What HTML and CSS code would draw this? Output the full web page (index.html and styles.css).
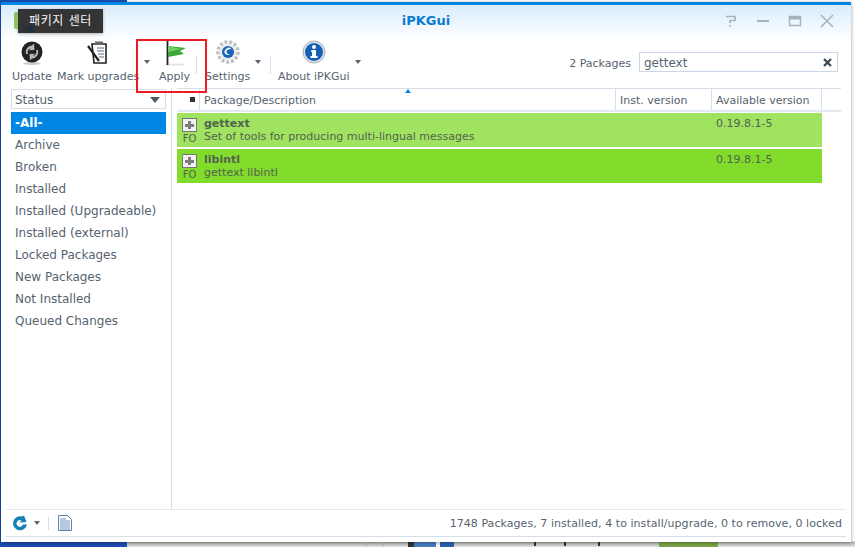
FILE: index.html
```html
<!DOCTYPE html>
<html lang="en">
<head>
<meta charset="utf-8">
<title>iPKGui</title>
<link rel="stylesheet" href="styles.css">
</head>
<body>
<div class="desktop">
  <div class="desk-blue"></div>
  <div class="desk-line l1"></div>
  <div class="desk-line l2"></div>
  <div class="person"></div>
  <div class="desk-mark m1"></div>
  <div class="desk-mark m2"></div>
  <div class="desk-mark m3"></div>
  <div class="desk-green"></div>
</div>
<main class="window">
  <header class="titlebar">
    <span class="title">iPKGui</span>
    <div class="winctl">
      <svg width="16" height="14" viewBox="0 0 16 14"><path d="M3 2.500h9v4H7v2.500M7 11v2" fill="none" stroke="#a9b2bb" stroke-width="1.6"/></svg>
      <svg width="16" height="14" viewBox="0 0 16 14"><path d="M2 7h12" stroke="#a9b2bb" stroke-width="2"/></svg>
      <svg width="16" height="14" viewBox="0 0 16 14"><path d="M2.500 2.500h11v9h-11z" fill="none" stroke="#a9b2bb" stroke-width="1.5"/><path d="M2 4h12" stroke="#a9b2bb" stroke-width="3"/></svg>
      <svg width="16" height="14" viewBox="0 0 16 14"><path d="M2 1l12 12M14 1L2 13" stroke="#a9b2bb" stroke-width="1.6"/></svg>
    </div>
  </header>
  <section class="toolbar">
    <div class="tool t-update">
      <svg class="ico" width="26" height="26" viewBox="0 0 26 26"><ellipse cx="13" cy="23.500" rx="9" ry="1.500" fill="#ccc"/><circle cx="13" cy="12" r="10.500" fill="#232323"/><path d="M7 14a6.500 6.500 0 0 1 6-8.500l2-2 .5 6.500-5.500.2 2-2a4 4 0 0 0-3 5.800zM19 10a6.500 6.500 0 0 1-6 8.500l-2 2-.5-6.500 5.500-.2-2 2a4 4 0 0 0 3-5.800z" fill="#b8b8b8"/></svg>
      <span>Update</span>
    </div>
    <div class="tool t-mark">
      <svg class="ico" width="26" height="26" viewBox="0 0 26 26"><path d="M7 4h14v19H9z" fill="#fff" stroke="#222" stroke-width="1.600"/><path d="M10 1.500h8v3.500h-8z" fill="#666"/><path d="M12 8h7M12 11h7M13 14h6M14 17h5" stroke="#5a6a80"/><path d="M3 6l11 15" stroke="#222" stroke-width="2.200"/></svg>
      <span>Mark upgrades</span>
    </div>
    <span class="caret c1"></span>
    <div class="tool t-apply">
      <svg class="ico" width="26" height="26" viewBox="0 0 26 26"><ellipse cx="13" cy="24.500" rx="10" ry="1" fill="#e2e2e2"/><path d="M5.500 0v25" stroke="#222" stroke-width="1.800"/><path d="M6 6l18 2-6 3 4 3-16 3z" fill="#3ba63a"/><path d="M6 6l13 3-13 3z" fill="#74cf62"/></svg>
      <span>Apply</span>
    </div>
    <i class="sep"></i>
    <div class="tool t-settings">
      <svg class="ico" width="26" height="26" viewBox="0 0 26 26"><circle cx="13" cy="12" r="10" fill="none" stroke="#bcc1c6" stroke-width="3.500" stroke-dasharray="3 1.800"/><circle cx="13" cy="12" r="8.500" fill="#e9ebed"/><circle cx="13" cy="12" r="6" fill="#1a63b8"/><path d="M9.500 13a4.500 4.500 0 0 1 7-4.500l-2.500 1a2.500 2.500 0 0 0-2.500 2.500 3 3 0 0 0 4 2 4.500 4.500 0 0 1-6-1z" fill="#eef4fa"/></svg>
      <span>Settings</span>
    </div>
    <span class="caret c2"></span>
    <i class="sep s2"></i>
    <div class="tool t-about">
      <svg class="ico" width="26" height="26" viewBox="0 0 26 26"><circle cx="13" cy="12" r="11" fill="#dfe3e8" stroke="#a8aeb8" stroke-width="1"/><circle cx="13" cy="12" r="9" fill="#155fb5"/><circle cx="13" cy="7" r="2" fill="#fff"/><path d="M10.500 10h4.500v6h1.500v2h-7v-2h1.500v-4h-1z" fill="#fff"/></svg>
      <span>About iPKGui</span>
    </div>
    <span class="caret c3"></span>
    <div class="search-area">
      <span class="count">2 Packages</span>
      <div class="search"><span>gettext</span><svg width="9" height="9" viewBox="0 0 9 9"><path d="M1 1l7 7M8 1L1 8" stroke="#3c4650" stroke-width="2.200"/></svg></div>
    </div>
  </section>
  <section class="content">
    <aside class="sidebar">
      <div class="select"><span>Status</span><i class="sel-caret"></i></div>
      <ul class="list">
        <li class="active">-All-</li>
        <li>Archive</li>
        <li>Broken</li>
        <li>Installed</li>
        <li>Installed (Upgradeable)</li>
        <li>Installed (external)</li>
        <li>Locked Packages</li>
        <li>New Packages</li>
        <li>Not Installed</li>
        <li>Queued Changes</li>
      </ul>
    </aside>
    <div class="table">
      <div class="thead">
        <span class="th-mark"><i></i></span>
        <span class="th-name">Package/Description</span>
        <span class="th-inst">Inst. version</span>
        <span class="th-avail">Available version</span>
        <span class="th-rest"></span>
        <i class="sort"></i>
      </div>
      <div class="row row-a">
        <div class="expand"><span class="plus"></span><small>FO</small></div>
        <div class="desc"><b>gettext</b><span>Set of tools for producing multi-lingual messages</span></div>
        <div class="ver">0.19.8.1-5</div>
      </div>
      <div class="row row-b">
        <div class="expand"><span class="plus"></span><small>FO</small></div>
        <div class="desc"><b>libintl</b><span>gettext libintl</span></div>
        <div class="ver">0.19.8.1-5</div>
      </div>
    </div>
  </section>
  <footer class="statusbar">
    <svg width="16" height="16" viewBox="0 0 16 16"><path d="M15 9.500A7 7 0 1 1 10 1.600L12 .5l2.500 6.500-7 .5 2-2A3.300 3.300 0 1 0 11 9.500z" fill="#1480b4"/></svg>
    <span class="caret c4"></span>
    <i class="sep s3"></i>
    <svg width="14" height="16" viewBox="0 0 14 16"><path d="M.5.500h9l4 4v11H.5z" fill="#fff" stroke="#5b80b4"/><path d="M2 4h6M2 6h10M2 8h10M2 10h10M2 12h10M2 14h10" stroke="#6f90bf"/></svg>
    <span class="summary">1748 Packages, 7 installed, 4 to install/upgrade, 0 to remove, 0 locked</span>
  </footer>
</main>
<div class="tooltip"><i class="tip-green"></i><i class="tip-dark"></i><span>패키지 센터</span></div>
<div class="redbox"></div>
</body>
</html>
```

FILE: styles.css
```css
* { box-sizing: border-box; }
html, body { margin: 0; padding: 0; }
body {
  width: 855px;
  height: 547px;
  overflow: hidden;
  position: relative;
  background: #fff;
  font-family: "DejaVu Sans", "Noto Sans CJK KR", sans-serif;
  color: #56636f;
}
.desktop { position: absolute; inset: 0; background: linear-gradient(to bottom, #fff 0, #fff 541px, #b4b4b4 542px, #e6e6e6 547px); }
.desk-blue { position: absolute; left: 0; top: 0; width: 127px; height: 547px; background: #1b4fb5; }
.desk-line { position: absolute; top: 542px; width: 1px; height: 5px; background: #c4c4c4; }
.l1 { left: 366px; }
.l2 { left: 383px; }
.person { position: absolute; left: 408px; top: 542px; width: 46px; height: 5px; background: linear-gradient(to right, #333 0 6px, #4a80c8 6px 28px, #fff 28px 32px, #2a62b4 32px); }
.desk-mark { position: absolute; top: 542px; width: 2px; height: 4px; background: #333; }
.m1 { left: 534px; }
.m2 { left: 564px; }
.m3 { left: 598px; }
.desk-green { position: absolute; left: 659px; top: 542px; width: 59px; height: 5px; background: #7da548; }
.window {
  position: absolute;
  left: 1px; top: 2px;
  width: 850px; height: 540px;
  background: #fff;
  border-top: 3px solid #0086e5;
  display: flex;
  flex-direction: column;
  box-shadow: 0 1px 4px rgba(0,0,0,.4);
}
.titlebar {
  height: 35px;
  flex: none;
  background: linear-gradient(#d9ecfb, #ffffff);
  position: relative;
  display: flex;
  align-items: center;
  justify-content: center;
  padding-bottom: 5px;
}
.title { font-size: 13px; font-weight: 700; color: #0a7bd0; }
.winctl { position: absolute; right: 16px; top: 9px; display: flex; gap: 16px; }
.toolbar { height: 48px; flex: none; position: relative; font-size: 11px; }
.tool { position: absolute; top: 0; display: flex; flex-direction: column; align-items: center; white-space: nowrap; }
.tool .ico { height: 26px; margin-bottom: 3px; }
.tool span { line-height: 16px; }
.t-update { left: 11px; }
.t-mark { left: 56px; }
.t-apply { left: 158px; }
.t-settings { left: 204px; }
.t-about { left: 277px; }
.t-about .ico { align-self: flex-start; margin-left: 23px; }
.caret { position: absolute; width: 0; height: 0; border: 3px solid transparent; border-top: 4px solid #5a6670; border-bottom: 0; }
.c1 { left: 143px; top: 20px; }
.c2 { left: 254px; top: 20px; }
.c3 { left: 354px; top: 20px; }
.sep { position: absolute; width: 1px; height: 18px; background: #d5dfea; }
.toolbar .sep { left: 195px; top: 16px; }
.toolbar .sep.s2 { left: 269px; }
.search-area { position: absolute; right: 13px; top: 12px; display: flex; align-items: center; gap: 8px; }
.count { font-size: 11px; padding-top: 3px; }
.search {
  width: 199px; height: 20px;
  border: 1px solid #c8d6e5;
  padding: 1px 5px 0 4px;
  font-size: 12px;
  display: flex;
  justify-content: space-between;
  align-items: center;
}
.content { flex: 1; min-height: 0; display: flex; }
.sidebar { width: 171px; flex: none; border-right: 1px solid #d5dfea; padding: 0 5px 0 10px; }
.select {
  height: 20px;
  margin-top: 1px;
  border: 1px solid #d5dfea;
  display: flex;
  justify-content: space-between;
  align-items: center;
  padding: 1px 5px 0 3px;
  font-size: 12px;
}
.sel-caret { width: 0; height: 0; border: 5px solid transparent; border-top: 6px solid #4f5a64; border-bottom: 0; }
.list { list-style: none; margin: 3px 0 0; padding: 0; font-size: 12px; }
.list li { height: 22px; line-height: 22px; padding-left: 4px; white-space: nowrap; }
.list li.active { background: #0086e5; color: #fff; font-weight: 700; }
.table { flex: 1; min-width: 0; padding-left: 5px; }
.thead {
  position: relative;
  height: 24px;
  margin-bottom: 1px;
  width: 664px;
  border-top: 1px solid #d5dfea;
  border-bottom: 2px solid #e3e9f0;
  display: flex;
  align-items: center;
  font-size: 11px;
}
.thead span { height: 100%; border-right: 1px solid #d5dfea; padding-left: 4px; line-height: 23px; white-space: nowrap; flex: none; }
.th-mark { width: 23px; display: flex; align-items: center; justify-content: center; padding: 0 0 0 8px !important; }
.th-mark i { width: 5px; height: 5px; background: #333; }
.th-name { width: 416px; }
.th-inst { width: 96px; }
.th-avail { width: 110px; }
.thead span.th-rest { flex: 1; border-right: 0; }
.sort { position: absolute; left: 228px; top: 0; border: 3px solid transparent; border-bottom: 4px solid #0086e5; border-top: 0; width: 0; height: 0; }
.row {
  width: 645px;
  height: 34px;
  margin-bottom: 2px;
  display: flex;
  font-size: 11px;
  color: #52624f;
}
.row-a { background: #a0e361; }
.row-b { background: #82dc2c; }
.expand { width: 25px; flex: none; display: flex; flex-direction: column; align-items: center; padding-top: 5px; }
.plus {
  width: 15px; height: 14px;
  flex: none;
  border: 1px solid #777;
  background: linear-gradient(#7c7c7c, #7c7c7c) center/9px 3px no-repeat, linear-gradient(#7c7c7c, #7c7c7c) center/3px 8px no-repeat, #f2f2f2;
}
.expand small { font-size: 10px; line-height: 12px; margin-top: 1px; }
.desc { flex: 1; display: flex; flex-direction: column; padding: 4px 0 0 2px; line-height: 13px; white-space: nowrap; }
.desc b { font-size: 11px; }
.ver { width: 106px; flex: none; padding-top: 4px; line-height: 14px; }
.statusbar {
  height: 28px;
  flex: none;
  margin: 0 0 5px 5px;
  width: 840px;
  border-top: 1px solid #e3e9f0;
  border-bottom: 1px solid #d5dfea;
  display: flex;
  align-items: center;
  padding-left: 6px;
  font-size: 11px;
}
.statusbar .caret { position: static; margin: 0 0 0 6px; }
.statusbar .sep { position: static; margin: 0 9px 0 8px; height: 13px; }
.summary { margin-left: auto; padding-right: 4px; letter-spacing: .055px; }
.tooltip {
  position: absolute;
  left: 18px; top: 9px;
  width: 85px; height: 24px;
  background: #343434;
  color: #f4f4f4;
  font-size: 12px;
  letter-spacing: .7px;
  display: flex;
  align-items: center;
  justify-content: center;
  padding-bottom: 4px;
  box-shadow: 0 1px 3px rgba(0,0,0,.3);
}
.tip-green { position: absolute; left: -4px; top: 3px; width: 4px; height: 17px; background: #8fc25a; border-radius: 2px 0 0 2px; }
.tip-dark { position: absolute; left: 6px; top: 16px; width: 11px; height: 8px; background: #22303a; border-radius: 50%; }
.redbox { position: absolute; left: 136px; top: 39px; width: 71px; height: 54px; border: 2px solid #ed1c24; }
```
